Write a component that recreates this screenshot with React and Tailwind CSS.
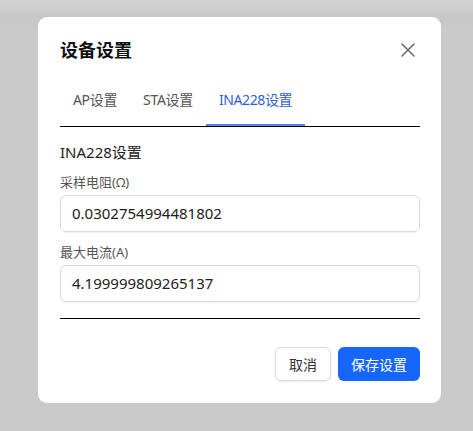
import React from "react";

export default function App() {
  const font = { fontFamily: '"Noto Sans", "Noto Sans CJK SC", sans-serif' };
  return (
    <div
      className="w-[473px] h-[431px] overflow-hidden bg-[#cacaca] relative"
      style={font}
    >
      <div className="absolute inset-x-0 top-0 h-[34px] bg-gradient-to-b from-[#d3d3d3] via-[#c6c7ca] to-[#cacaca]" />
      <div className="absolute left-[38px] top-[17px] w-[403px] h-[386px] bg-white rounded-[9px] pl-[22px] pr-[21px] pt-[19px] flex flex-col">
        <div className="h-[28px] flex items-center justify-between">
          <div className="text-[18px] font-bold text-[#111] leading-[28px]">设备设置</div>
          <svg width="16" height="16" viewBox="0 0 16 16" className="mr-[4px]">
            <path d="M2 2 L14 14 M14 2 L2 14" stroke="#6b6b78" strokeWidth="1.6" strokeLinecap="round" />
          </svg>
        </div>
        <div className="mt-[16px] flex border-b border-black">
          <div className="w-[70px] pt-[10px] pb-[16px] text-[14px] leading-[20px] text-[#555] text-center tracking-[-0.3px]">AP设置</div>
          <div className="w-[76px] pt-[10px] pb-[16px] text-[14px] leading-[20px] text-[#555] text-center tracking-[-0.3px]">STA设置</div>
          <div className="w-[99px] pt-[10px] pb-[14px] text-[14px] leading-[20px] text-[#2f5fd6] text-center tracking-[-0.4px] border-b-2 border-[#4a86e8]">INA228设置</div>
        </div>
        <div className="mt-[14px] text-[15px] leading-[22px] text-[#222]">INA228设置</div>
        <div className="mt-[9px] text-[13px] leading-[20px] text-[#555]">采样电阻(Ω)</div>
        <div className="mt-[3px] h-[37px] border border-[#dcdcdc] rounded-[6px] shadow-[0_1px_2px_rgba(0,0,0,0.06)] flex items-center px-[11px] text-[15px] text-[#222]">
          0.0302754994481802
        </div>
        <div className="mt-[10px] text-[13px] leading-[20px] text-[#555]">最大电流(A)</div>
        <div className="mt-[3px] h-[37px] border border-[#dcdcdc] rounded-[6px] shadow-[0_1px_2px_rgba(0,0,0,0.06)] flex items-center px-[11px] text-[15px] text-[#222]">
          4.199999809265137
        </div>
        <div className="mt-[16px] border-t border-black" />
        <div className="mt-[28px] flex justify-end gap-[7px]">
          <div className="w-[56px] h-[34px] border border-[#dcdcdc] rounded-[6px] shadow-[0_1px_2px_rgba(0,0,0,0.08)] flex items-center justify-center text-[14px] text-[#333]">
            取消
          </div>
          <div className="w-[82px] h-[34px] rounded-[6px] bg-[#1766fb] flex items-center justify-center text-[14px] text-white">
            保存设置
          </div>
        </div>
      </div>
    </div>
  );
}
